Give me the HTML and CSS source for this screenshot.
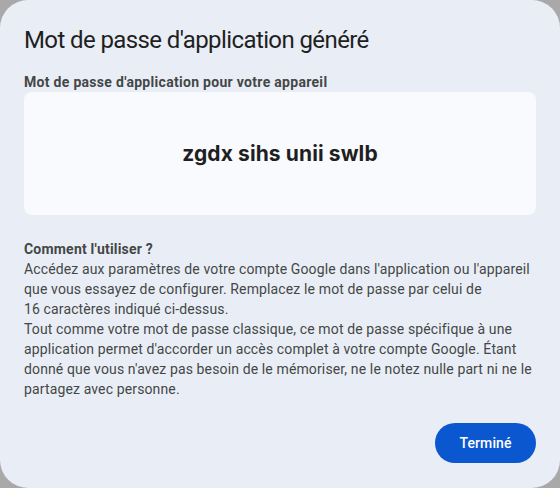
FILE: index.html
```html
<!DOCTYPE html>
<html lang="fr">
<head>
<meta charset="utf-8">
<link rel="stylesheet" href="styles.css">
</head>
<body>
<div class="dialog">
  <h1 class="title">Mot de passe d'application généré</h1>
  <div class="label">Mot de passe d'application pour votre appareil</div>
  <div class="pwbox"><span class="pw">zgdx sihs unii swlb</span></div>
  <div class="howto">
    <div class="howto-title">Comment l'utiliser ?</div>
    <p class="txt">Accédez aux paramètres de votre compte Google dans l'application ou l'appareil que vous essayez de configurer. Remplacez le mot de passe par celui de 16&nbsp;caractères indiqué ci-dessus.</p>
    <p class="txt">Tout comme votre mot de passe classique, ce mot de passe spécifique à une application permet d'accorder un accès complet à votre compte Google. Étant donné que vous n'avez pas besoin de le mémoriser, ne le notez nulle part ni ne le partagez avec personne.</p>
  </div>
  <div class="actions">
    <button class="btn">Terminé</button>
  </div>
</div>
</body>
</html>
```

FILE: styles.css
```css
html, body {
  margin: 0;
  padding: 0;
  width: 560px;
  height: 488px;
  overflow: hidden;
  background: #a9a9a9;
}
.dialog {
  box-sizing: border-box;
  width: 560px;
  height: 488px;
  background: #e9eef6;
  border-radius: 28px;
  padding: 24px 24px 0 24px;
  font-family: Roboto, "Liberation Sans", sans-serif;
  color: #444746;
  display: flex;
  flex-direction: column;
}
.title {
  margin: 0;
  font-family: Roboto, sans-serif;
  font-weight: 400;
  font-size: 24px;
  line-height: 32px;
  letter-spacing: -0.6px;
  color: #1f1f1f;
}
.label {
  margin-top: 17px;
  font-size: 14px;
  font-weight: 700;
  line-height: 18px;
  letter-spacing: 0.3px;
}
.pwbox {
  margin-top: 1px;
  height: 123px;
  background: #f8fafd;
  border-radius: 8px;
  display: flex;
  align-items: center;
  justify-content: center;
}
.pw {
  font-family: Inter, Roboto, sans-serif;
  font-weight: 700;
  font-size: 21px;
  color: #1f1f1f;
  letter-spacing: 0.1px;
}
.howto {
  margin-top: 24px;
}
.howto-title {
  font-weight: 700;
  font-size: 14px;
  line-height: 20px;
  letter-spacing: 0.2px;
}
.txt {
  margin: 0;
  font-size: 14px;
  line-height: 20px;
  letter-spacing: 0.13px;
}
.actions {
  margin-top: 24px;
  display: flex;
  justify-content: flex-end;
}
.btn {
  width: 101px;
  height: 40px;
  border: none;
  border-radius: 20px;
  background: #0b57d0;
  color: #ffffff;
  font-family: Roboto, sans-serif;
  font-weight: 500;
  font-size: 14px;
  letter-spacing: 0.1px;
  cursor: pointer;
}
```
